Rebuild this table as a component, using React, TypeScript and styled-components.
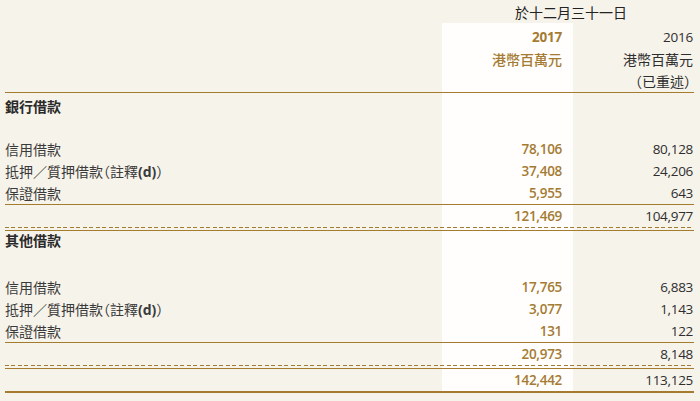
import React from 'react';
import styled, { createGlobalStyle } from 'styled-components';

const GOLD = '#a57b33';
const LINE = '#a47b2f';
const INK = '#3a3a3a';
const PAPER = '#f6f3eb';

interface Item {
  label: string;
  note?: string;
  cur: string;
  prev: string;
}

interface Section {
  title: string;
  items: Item[];
  cur: string;
  prev: string;
}

const sections: Section[] = [
  {
    title: '銀行借款',
    items: [
      { label: '信用借款', cur: '78,106', prev: '80,128' },
      { label: '抵押／質押借款', note: '(d)', cur: '37,408', prev: '24,206' },
      { label: '保證借款', cur: '5,955', prev: '643' },
    ],
    cur: '121,469',
    prev: '104,977',
  },
  {
    title: '其他借款',
    items: [
      { label: '信用借款', cur: '17,765', prev: '6,883' },
      { label: '抵押／質押借款', note: '(d)', cur: '3,077', prev: '1,143' },
      { label: '保證借款', cur: '131', prev: '122' },
    ],
    cur: '20,973',
    prev: '8,148',
  },
];

const App: React.FC = () => {
  return (
    <Page>
      <GlobalStyle />
      <TitleRow>
        <Title>於十二月三十一日</Title>
      </TitleRow>
      <Table>
        <HeadRow>
          <span />
          <HeadCell $accent $bold>2017</HeadCell>
          <HeadCell>2016</HeadCell>
        </HeadRow>
        <HeadRow>
          <span />
          <HeadCell $accent $cjk>港幣百萬元</HeadCell>
          <HeadCell $cjk>港幣百萬元</HeadCell>
        </HeadRow>
        <HeadRow>
          <span />
          <span />
          <HeadCell $cjk $overhang>（已重述）</HeadCell>
        </HeadRow>
        <SolidRule />

        {sections.map((section, i) => (
          <React.Fragment key={section.title}>
            <Heading $tight={i > 0}>{section.title}</Heading>
            {section.items.map((item, j) => (
              <Row key={j}>
                <Label>
                  {item.label}
                  {item.note && (
                    <>
                      <Paren>（</Paren>註釋<b>{item.note}</b>）
                    </>
                  )}
                </Label>
                <Num $accent>{item.cur}</Num>
                <Num>{item.prev}</Num>
              </Row>
            ))}
            <SolidRule />
            <Row>
              <span />
              <Num $accent>{section.cur}</Num>
              <Num>{section.prev}</Num>
            </Row>
            <DoubleRule />
            {i === sections.length - 1 && (
              <>
                <Row>
                  <span />
                  <Num $accent>142,442</Num>
                  <Num>113,125</Num>
                </Row>
                <ThickRule />
              </>
            )}
          </React.Fragment>
        ))}
      </Table>
    </Page>
  );
};

export default App;

// Styled Components
const GlobalStyle = createGlobalStyle`
  html, body {
    margin: 0;
    padding: 0;
    background: ${PAPER};
  }
  body {
    font-family: "Open Sans", "Noto Sans CJK TC", sans-serif;
    color: ${INK};
  }
`;

const COLS = '437px 131px 121px';

const Page = styled.div`
  width: 689px;
  margin-left: 5px;
`;

const TitleRow = styled.div`
  display: grid;
  grid-template-columns: ${COLS};
  height: 23px;
  padding-top: 1px;
  box-sizing: border-box;
`;

const Title = styled.div`
  grid-column: 2 / 4;
  text-align: center;
  font-family: "Noto Sans CJK TC", sans-serif;
  font-size: 14px;
  line-height: 22px;
  color: #222;
  padding-left: 6px;
`;

const Table = styled.div`
  padding-top: 3px;
  background: linear-gradient(
    to right,
    transparent 437px,
    #fffefc 437px,
    #fffefc 568px,
    transparent 568px
  );
`;

const HeadRow = styled.div`
  display: grid;
  grid-template-columns: ${COLS};
  height: 22px;
  line-height: 22px;
`;

const HeadCell = styled.div<{ $accent?: boolean; $bold?: boolean; $cjk?: boolean; $overhang?: boolean }>`
  text-align: right;
  padding-right: ${(p) => (p.$accent ? '11px' : '1px')};
  margin-right: ${(p) => (p.$overhang ? '-5px' : '0')};
  font-family: ${(p) => (p.$cjk ? '"Noto Sans CJK TC"' : '"Open Sans"')}, sans-serif;
  font-size: ${(p) => (p.$cjk ? '14px' : '13.5px')};
  font-weight: ${(p) => (p.$bold ? 700 : p.$accent ? 500 : 400)};
  letter-spacing: ${(p) => (p.$cjk ? '0' : '-0.2px')};
  color: ${(p) => (p.$accent ? GOLD : '#2e2e2e')};
  white-space: nowrap;
`;

const Heading = styled.div<{ $tight?: boolean }>`
  height: 45px;
  padding-top: ${(p) => (p.$tight ? '0' : '2px')};
  box-sizing: border-box;
  font-family: "Noto Sans CJK TC", sans-serif;
  font-size: 14px;
  font-weight: 700;
  line-height: ${(p) => (p.$tight ? '18px' : '22px')};
  color: #2a2a2a;
`;

const Row = styled.div`
  display: grid;
  grid-template-columns: ${COLS};
  height: 22px;
  line-height: 22px;
`;

const Label = styled.div`
  font-family: "Noto Sans CJK TC", sans-serif;
  font-size: 14px;
  white-space: nowrap;

  b {
    font-family: "Open Sans", sans-serif;
    font-weight: 700;
  }
`;

const Paren = styled.span`
  font-feature-settings: "halt";
`;

const Num = styled.div<{ $accent?: boolean }>`
  text-align: right;
  padding-right: ${(p) => (p.$accent ? '11px' : '1px')};
  font-family: "Open Sans", sans-serif;
  font-size: 13.5px;
  letter-spacing: -0.3px;
  font-weight: ${(p) => (p.$accent ? 600 : 400)};
  color: ${(p) => (p.$accent ? GOLD : '#2e2e2e')};
`;

const SolidRule = styled.div`
  height: 1px;
  background: ${LINE};
`;

const DoubleRule = styled.div`
  height: 4px;
  box-sizing: border-box;
  border-bottom: 1px solid ${LINE};
  background-image: repeating-linear-gradient(
    to right,
    ${LINE} 0 4px,
    transparent 4px 6.5px
  );
  background-size: 100% 1px;
  background-repeat: no-repeat;
`;

const ThickRule = styled.div`
  height: 2px;
  background: ${LINE};
`;
